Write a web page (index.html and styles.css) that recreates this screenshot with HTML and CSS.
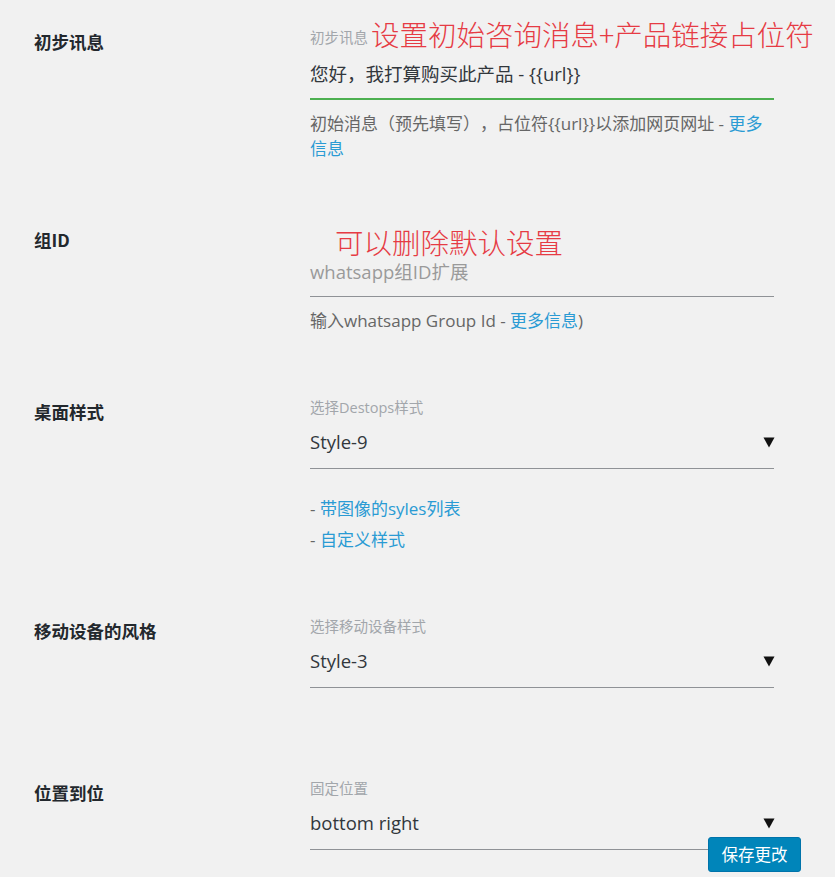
FILE: index.html
```html
<!DOCTYPE html>
<html lang="zh-CN">
<head>
<meta charset="utf-8">
<title>设置</title>
<link rel="stylesheet" href="styles.css">
</head>
<body>
<div class="form">
  <div class="row">
    <div class="th">初步讯息</div>
    <div class="td">
      <div class="float-label">
        <span class="small">初步讯息</span>
        <span class="annot annot-up">设置初始咨询消息+产品链接占位符</span>
      </div>
      <div class="input input-active">您好，我打算购买此产品 - {{url}}</div>
      <p class="desc">初始消息（预先填写），占位符{{url}}以添加网页网址 - <a class="link" href="#">更多信息</a></p>
    </div>
  </div>

  <div class="row">
    <div class="th">组ID</div>
    <div class="td">
      <div class="float-label">
        <span class="annot annot-down">可以删除默认设置</span>
      </div>
      <div class="input placeholder">whatsapp组ID扩展</div>
      <p class="desc">输入whatsapp Group Id - <a class="link" href="#">更多信息</a>)</p>
    </div>
  </div>

  <div class="row">
    <div class="th">桌面样式</div>
    <div class="td">
      <div class="float-label"><span class="small">选择Destops样式</span></div>
      <div class="input select">
        <span>Style-9</span>
        <svg class="caret" width="12" height="12" viewBox="0 0 12 12"><path d="M0.5 1.5 H11.5 L6 11.5 Z" fill="#111"/></svg>
      </div>
      <div class="links">
        <div>- <a class="link" href="#">带图像的syles列表</a></div>
        <div>- <a class="link" href="#">自定义样式</a></div>
      </div>
    </div>
  </div>

  <div class="row">
    <div class="th">移动设备的风格</div>
    <div class="td">
      <div class="float-label"><span class="small">选择移动设备样式</span></div>
      <div class="input select select-solo">
        <span>Style-3</span>
        <svg class="caret" width="12" height="12" viewBox="0 0 12 12"><path d="M0.5 1.5 H11.5 L6 11.5 Z" fill="#111"/></svg>
      </div>
    </div>
  </div>

  <div class="row">
    <div class="th">位置到位</div>
    <div class="td">
      <div class="float-label"><span class="small">固定位置</span></div>
      <div class="input select">
        <span>bottom right</span>
        <svg class="caret" width="12" height="12" viewBox="0 0 12 12"><path d="M0.5 1.5 H11.5 L6 11.5 Z" fill="#111"/></svg>
      </div>
    </div>
  </div>
</div>
<button class="save" type="button">保存更改</button>
</body>
</html>
```

FILE: styles.css
```css
* { box-sizing: border-box; }

html, body {
  margin: 0;
  padding: 0;
  background: #f1f1f1;
}

body {
  font-family: "Open Sans", "Noto Sans CJK SC", sans-serif;
  color: #32373c;
  width: 835px;
  height: 877px;
  overflow: hidden;
  text-spacing-trim: space-all;
}

.form {
  padding-top: 28px;
  display: flex;
  flex-direction: column;
  gap: 65px;
}

.row {
  display: flex;
}

.th {
  width: 310px;
  padding-left: 34px;
  padding-top: 4px;
  font-size: 17.5px;
  line-height: 20px;
  font-weight: bold;
  color: #23282d;
  font-family: "Noto Sans CJK SC", "Open Sans", sans-serif;
}

.td {
  width: 464px;
}

.float-label {
  height: 20px;
  display: flex;
  align-items: center;
  gap: 3px;
  white-space: nowrap;
}

.small {
  font-size: 14.5px;
  line-height: 20px;
  color: #a2a6ab;
}

.annot {
  font-family: "Noto Sans CJK SC", sans-serif;
  font-weight: 300;
  font-size: 28.5px;
  line-height: 20px;
  color: #e63b44;
}

.annot-up { margin-top: -8px; }
.annot-down { margin-top: 12px; margin-left: 25px; }

.input {
  box-sizing: content-box;
  height: 50px;
  display: flex;
  align-items: center;
  font-size: 18.5px;
  color: #32373c;
  border-bottom: 1px solid #8f9296;
  white-space: nowrap;
}

.input-active {
  border-bottom: 2px solid #4caf50;
}

.placeholder {
  color: #9a9a9a;
}

.select {
  justify-content: space-between;
  height: 46px;
  padding-bottom: 4px;
}

.select .caret { margin-top: 1px; }

.select-solo {
  margin-bottom: 26px;
}

.caret {
  margin-right: -1px;
}

.desc {
  margin: 11px 0 0;
  font-size: 17px;
  line-height: 25px;
  color: #666;
}

.links {
  margin: 24px 0 -3px;
  font-size: 17px;
  line-height: 31px;
  color: #666;
}

.link {
  color: #2a9bd4;
  text-decoration: none;
}

.save {
  position: absolute;
  left: 708px;
  top: 837px;
  width: 93px;
  height: 35px;
  margin: 0;
  padding: 0;
  border: 1px solid #0073aa;
  border-radius: 3px;
  background: #0085ba;
  color: #fff;
  font-family: "Noto Sans CJK SC", sans-serif;
  font-size: 16.5px;
  line-height: 33px;
  text-align: center;
}
```
